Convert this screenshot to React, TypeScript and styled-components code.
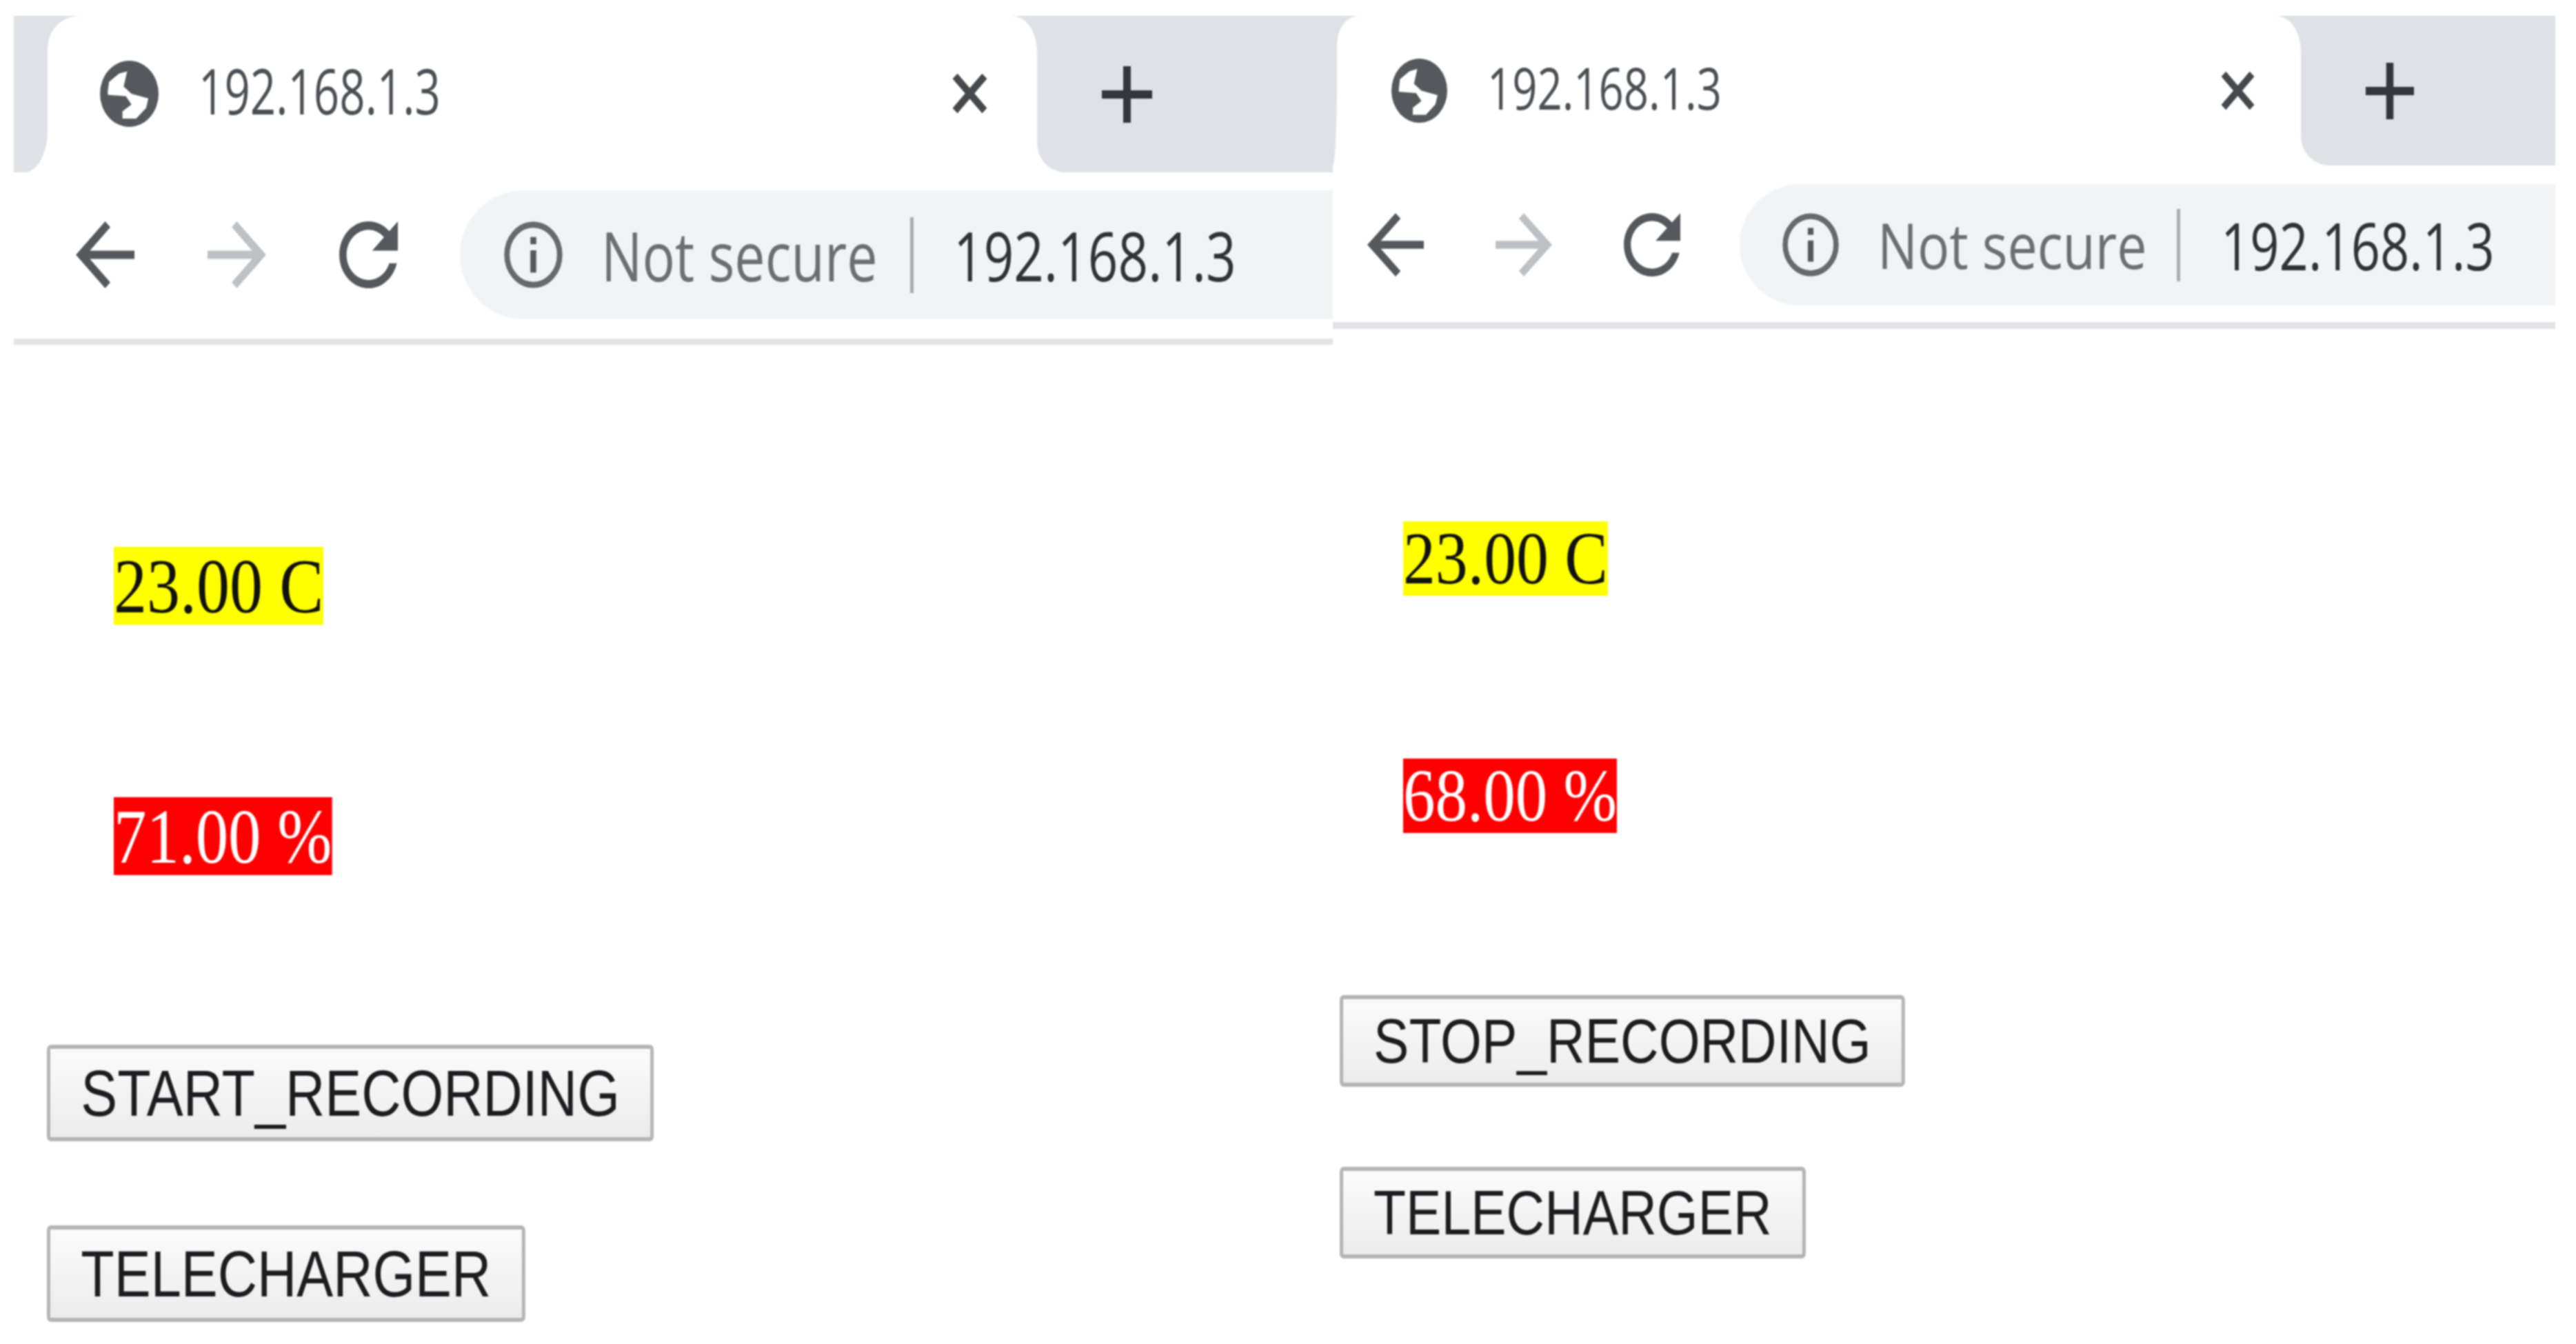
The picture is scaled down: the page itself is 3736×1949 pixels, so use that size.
import styled, { createGlobalStyle } from "styled-components";

const GREY = "#dee1e6";

interface IMetrics {
  stub: number;
  stubRadius: string;
  flare: [number, number];
  tabHeight: number;
  newTabHeight: number;
  tabPadLeft: number;
  globe: [number, number];
  titleGap: number;
  titleFont: number;
  titleWidth: number;
  closeWidth: number;
  closeHeight: number;
  closeRight: number;
  newTabWidth: number;
  newTabOffset: number;
  plus: [number, number];
  toolbarPad: [number, number];
  omniHeight: number;
  dividerHeight: number;
  navLeft: number;
  navIcon: [number, number];
  navGap: number;
  omniGap: number;
  infoLeft: number;
  infoGap: number;
  hintFont: number;
  hintWidth: number;
  sepGap: number;
  sepHeight: number;
  urlGap: number;
  urlFont: number;
  urlWidth: number;
  bodyTop: number;
  badgeLeft: number;
  badgeFont: number;
  badgeGap: number;
  buttonLeft: number;
  buttonGap: [number, number];
  buttonHeight: number;
  buttonFont: number;
  buttonPad: number;
  buttonScale: number;
}

const left: IMetrics = {
  stub: 49,
  stubRadius: "0 0 34px 0 / 0 0 60px 0",
  flare: [46, 45],
  tabHeight: 229,
  newTabHeight: 227,
  tabPadLeft: 76,
  globe: [85, 96],
  titleGap: 58,
  titleFont: 91,
  titleWidth: 352,
  closeWidth: 51,
  closeHeight: 57,
  closeRight: 72,
  newTabWidth: 429,
  newTabOffset: 94,
  plus: [73, 82],
  toolbarPad: [24, 28],
  omniHeight: 187,
  dividerHeight: 9,
  navLeft: 90,
  navIcon: [85, 97],
  navGap: 106,
  omniGap: 90,
  infoLeft: 64,
  infoGap: 56,
  hintFont: 98,
  hintWidth: 402,
  sepGap: 46,
  sepHeight: 110,
  urlGap: 58,
  urlFont: 98,
  urlWidth: 411,
  bodyTop: 293,
  badgeLeft: 145,
  badgeFont: 113,
  badgeGap: 250,
  buttonLeft: 48,
  buttonGap: [246, 122],
  buttonHeight: 140,
  buttonFont: 95,
  buttonPad: 53,
  buttonScale: 0.835,
};

const right: IMetrics = {
  stub: 6,
  stubRadius: "0 0 8px 0 / 0 0 170px 0",
  flare: [31, 40],
  tabHeight: 220,
  newTabHeight: 217,
  tabPadLeft: 79,
  globe: [81, 93],
  titleGap: 58,
  titleFont: 84,
  titleWidth: 341,
  closeWidth: 49,
  closeHeight: 55,
  closeRight: 67,
  newTabWidth: 369,
  newTabOffset: 94,
  plus: [70, 82],
  toolbarPad: [24, 24],
  omniHeight: 176,
  dividerHeight: 10,
  navLeft: 50,
  navIcon: [82, 92],
  navGap: 104,
  omniGap: 86,
  infoLeft: 62,
  infoGap: 56,
  hintFont: 91,
  hintWidth: 392,
  sepGap: 42,
  sepHeight: 105,
  urlGap: 59,
  urlFont: 96,
  urlWidth: 398,
  bodyTop: 279,
  badgeLeft: 102,
  badgeFont: 108,
  badgeGap: 236,
  buttonLeft: 10,
  buttonGap: [235, 116],
  buttonHeight: 133,
  buttonFont: 91,
  buttonPad: 52,
  buttonScale: 0.846,
};

const GlobalStyle = createGlobalStyle`
  html, body {
    margin: 0;
    padding: 0;
    background: #fff;
  }
`;

const Page = styled.div`
  display: flex;
  width: 3736px;
  height: 1949px;
  padding: 23px 30px 0 20px;
  box-sizing: border-box;
  overflow: hidden;
  filter: blur(1.2px);
`;

const Browser = styled.div<{ $width: number }>`
  width: ${(p) => p.$width}px;
  flex: none;
  display: flex;
  flex-direction: column;
`;

const TabStrip = styled.div<{ $m: IMetrics }>`
  display: flex;
  align-items: flex-start;
  height: ${(p) => p.$m.tabHeight}px;
`;

const TabStub = styled.div<{ $m: IMetrics }>`
  flex: none;
  width: ${(p) => p.$m.stub}px;
  height: ${(p) => p.$m.newTabHeight}px;
  background: ${GREY};
  border-radius: ${(p) => p.$m.stubRadius};
`;

const Tab = styled.div<{ $m: IMetrics }>`
  position: relative;
  flex: 1;
  min-width: 0;
  display: flex;
  align-items: center;
  height: ${(p) => p.$m.tabHeight}px;
  padding: 0 ${(p) => p.$m.closeRight}px 4px ${(p) => p.$m.tabPadLeft}px;
  box-sizing: border-box;
  background: #fff;
  &::before {
    content: "";
    position: absolute;
    left: 0;
    top: 0;
    width: ${(p) => p.$m.flare[0]}px;
    height: ${(p) => p.$m.flare[1]}px;
    background: radial-gradient(
      ellipse ${(p) => p.$m.flare[0]}px ${(p) => p.$m.flare[1]}px at 100% 100%,
      transparent 98%,
      ${GREY} 100%
    );
  }
`;

const TabIcon = styled.svg<{ $size: [number, number] }>`
  flex: none;
  width: ${(p) => p.$size[0]}px;
  height: ${(p) => p.$size[1]}px;
`;

const TabTitle = styled.span<{ $m: IMetrics }>`
  flex: 1;
  margin: 0 0 8px ${(p) => p.$m.titleGap}px;
  font-family: "Open Sans", sans-serif;
  font-size: ${(p) => p.$m.titleFont}px;
  line-height: 1;
  color: #4c5054;
  white-space: nowrap;
  transform: scaleX(${(p) => p.$m.titleWidth / (p.$m.titleFont * 5.38)});
  transform-origin: left center;
`;

const NewTab = styled.div<{ $m: IMetrics }>`
  position: relative;
  flex: none;
  display: flex;
  align-items: center;
  width: ${(p) => p.$m.newTabWidth}px;
  height: ${(p) => p.$m.newTabHeight}px;
  padding-left: ${(p) => p.$m.newTabOffset}px;
  box-sizing: border-box;
  background: ${GREY};
  border-bottom-left-radius: 42px;
  &::before {
    content: "";
    position: absolute;
    left: -35px;
    top: 0;
    width: 35px;
    height: 50px;
    background: radial-gradient(
      ellipse 35px 50px at 0 100%,
      transparent 98%,
      ${GREY} 100%
    );
  }
`;

const Toolbar = styled.div<{ $m: IMetrics }>`
  display: flex;
  align-items: center;
  padding: ${(p) => p.$m.toolbarPad[0]}px 0 ${(p) => p.$m.toolbarPad[1]}px
    ${(p) => p.$m.navLeft}px;
  border-bottom: ${(p) => p.$m.dividerHeight}px solid #e1e3e6;
`;

const NavIcon = styled.svg<{ $m: IMetrics; $color: string; $last?: boolean }>`
  flex: none;
  width: ${(p) => p.$m.navIcon[0]}px;
  height: ${(p) => p.$m.navIcon[1]}px;
  margin-right: ${(p) => (p.$last ? p.$m.omniGap : p.$m.navGap)}px;
  fill: ${(p) => p.$color};
`;

const Omnibox = styled.div<{ $m: IMetrics }>`
  flex: 1;
  min-width: 0;
  display: flex;
  align-items: center;
  height: ${(p) => p.$m.omniHeight}px;
  padding-left: ${(p) => p.$m.infoLeft}px;
  background: #f1f3f4;
  border-radius: ${(p) => p.$m.omniHeight / 2}px 0 0 ${(p) => p.$m.omniHeight / 2}px;
`;

const InfoIcon = styled.svg<{ $m: IMetrics }>`
  flex: none;
  width: ${(p) => p.$m.navIcon[0]}px;
  height: ${(p) => p.$m.navIcon[1]}px;
  margin-right: ${(p) => p.$m.infoGap}px;
`;

const SecurityHint = styled.span<{ $m: IMetrics }>`
  flex: none;
  width: ${(p) => p.$m.hintWidth}px;
  font-family: "Open Sans", sans-serif;
  font-size: ${(p) => p.$m.hintFont}px;
  line-height: 1;
  color: #6b6f73;
  white-space: nowrap;
  transform: scaleX(${(p) => p.$m.hintWidth / (p.$m.hintFont * 5.09)});
  transform-origin: left center;
`;

const Separator = styled.div<{ $m: IMetrics }>`
  flex: none;
  width: 5px;
  height: ${(p) => p.$m.sepHeight}px;
  margin-left: ${(p) => p.$m.sepGap}px;
  background: #a9abad;
`;

const Url = styled.span<{ $m: IMetrics }>`
  flex: none;
  width: ${(p) => p.$m.urlWidth}px;
  margin-left: ${(p) => p.$m.urlGap}px;
  font-family: "Open Sans", sans-serif;
  font-size: ${(p) => p.$m.urlFont}px;
  line-height: 1;
  color: #303236;
  white-space: nowrap;
  transform: scaleX(${(p) => p.$m.urlWidth / (p.$m.urlFont * 5.38)});
  transform-origin: left center;
`;

const Content = styled.div<{ $m: IMetrics }>`
  display: flex;
  flex-direction: column;
  align-items: flex-start;
  padding-top: ${(p) => p.$m.bodyTop}px;
`;

const Reading = styled.span<{
  $m: IMetrics;
  $bg: string;
  $color: string;
  $scale: number;
  $top?: number;
}>`
  display: inline-block;
  margin: ${(p) => p.$top ?? 0}px 0 0 ${(p) => p.$m.badgeLeft}px;
  font-family: "Liberation Serif", serif;
  font-size: ${(p) => p.$m.badgeFont}px;
  line-height: ${(p) => p.$m.badgeFont}px;
  white-space: pre;
  color: ${(p) => p.$color};
  background: ${(p) => p.$bg};
  transform: scaleX(${(p) => p.$scale});
  transform-origin: left center;
`;

const ActionButton = styled.button<{ $m: IMetrics; $top: number }>`
  margin: ${(p) => p.$top}px 0 0 ${(p) => p.$m.buttonLeft}px;
  height: ${(p) => p.$m.buttonHeight}px;
  padding: 0 ${(p) => p.$m.buttonPad}px;
  font-family: "Liberation Sans", sans-serif;
  font-size: ${(p) => p.$m.buttonFont}px;
  white-space: nowrap;
  color: #1d1d20;
  background: linear-gradient(#fbfbfb, #ececec);
  border: 6px solid #b5b5b5;
  border-radius: 7px;
  transform: scaleX(${(p) => p.$m.buttonScale});
  transform-origin: left center;
`;

function Globe({ size }: { size: [number, number] }) {
  return (
    <TabIcon $size={size} viewBox="0 0 24 24" preserveAspectRatio="none">
      <circle cx="12" cy="12" r="12" fill="#55595e" />
      <path
        fill="#fff"
        d="M3.2 11.1 3.7 7.7 7.8 4.7 11.1 3.9 9.7 9.4 12.9 12 19.8 13.7 18.9 17.1 14.8 21 9.2 21 9.2 18.4 12.9 15.9 10.6 12.9 3.2 12.4Z"
      />
    </TabIcon>
  );
}

function CloseIcon({ m }: { m: IMetrics }) {
  return (
    <TabIcon $size={[m.closeWidth, m.closeHeight]} viewBox="0 0 10 10" preserveAspectRatio="none">
      <path d="M.8.6 9.2 9.4M9.2.6.8 9.4" stroke="#45494d" strokeWidth="1.9" fill="none" />
    </TabIcon>
  );
}

function PlusIcon({ m }: { m: IMetrics }) {
  return (
    <TabIcon $size={m.plus} viewBox="0 0 73 82" preserveAspectRatio="none">
      <path d="M31 0h11v35h31v12H42v35H31V47H0V35h31z" fill="#33373b" />
    </TabIcon>
  );
}

function Chrome({ m }: { m: IMetrics }) {
  return (
    <>
      <TabStrip $m={m}>
        <TabStub $m={m} />
        <Tab $m={m}>
          <Globe size={m.globe} />
          <TabTitle $m={m}>192.168.1.3</TabTitle>
          <CloseIcon m={m} />
        </Tab>
        <NewTab $m={m}>
          <PlusIcon m={m} />
        </NewTab>
      </TabStrip>
      <Toolbar $m={m}>
        <NavIcon $m={m} $color="#55595e" viewBox="4 4 16 16" preserveAspectRatio="none">
          <path d="M20 11H7.83l5.59-5.59L12 4l-8 8 8 8 1.41-1.41L7.83 13H20v-2z" />
        </NavIcon>
        <NavIcon $m={m} $color="#bdc1c6" viewBox="4 4 16 16" preserveAspectRatio="none">
          <path d="M12 4l-1.41 1.41L16.17 11H4v2h12.17l-5.58 5.59L12 20l8-8z" />
        </NavIcon>
        <NavIcon $m={m} $color="#55595e" $last viewBox="4 4 16 16" preserveAspectRatio="none">
          <path d="M17.65 6.35C16.2 4.9 14.21 4 12 4c-4.42 0-7.99 3.58-7.99 8s3.57 8 7.99 8c3.73 0 6.84-2.55 7.73-6h-2.08c-.82 2.33-3.04 4-5.65 4-3.31 0-6-2.69-6-6s2.69-6 6-6c1.66 0 3.14.69 4.22 1.78L13 11h7V4l-2.35 2.35z" />
        </NavIcon>
        <Omnibox $m={m}>
          <InfoIcon $m={m} viewBox="0 0 24 24" preserveAspectRatio="none">
            <circle cx="12" cy="12" r="10.8" fill="none" stroke="#66696d" strokeWidth="2.2" />
            <path d="M10.8 5.6h2.4v2.6h-2.4zM10.8 10.4h2.4v8h-2.4z" fill="#55585c" />
          </InfoIcon>
          <SecurityHint $m={m}>Not secure</SecurityHint>
          <Separator $m={m} />
          <Url $m={m}>192.168.1.3</Url>
        </Omnibox>
      </Toolbar>
    </>
  );
}

function App() {
  return (
    <>
      <GlobalStyle />
      <Page>
        <Browser $width={1913}>
          <Chrome m={left} />
          <Content $m={left}>
            <Reading $m={left} $bg="#ffff00" $color="#111" $scale={0.85}>
              23.00 C
            </Reading>
            <Reading $m={left} $bg="#ff0000" $color="#fff" $scale={0.84} $top={left.badgeGap}>
              71.00 %
            </Reading>
            <ActionButton $m={left} $top={left.buttonGap[0]}>
              START_RECORDING
            </ActionButton>
            <ActionButton $m={left} $top={left.buttonGap[1]}>
              TELECHARGER
            </ActionButton>
          </Content>
        </Browser>
        <Browser $width={1773}>
          <Chrome m={right} />
          <Content $m={right}>
            <Reading $m={right} $bg="#ffff00" $color="#111" $scale={0.868}>
              23.00 C
            </Reading>
            <Reading $m={right} $bg="#ff0000" $color="#fff" $scale={0.861} $top={right.badgeGap}>
              68.00 %
            </Reading>
            <ActionButton $m={right} $top={right.buttonGap[0]}>
              STOP_RECORDING
            </ActionButton>
            <ActionButton $m={right} $top={right.buttonGap[1]}>
              TELECHARGER
            </ActionButton>
          </Content>
        </Browser>
      </Page>
    </>
  );
}

export default App;
